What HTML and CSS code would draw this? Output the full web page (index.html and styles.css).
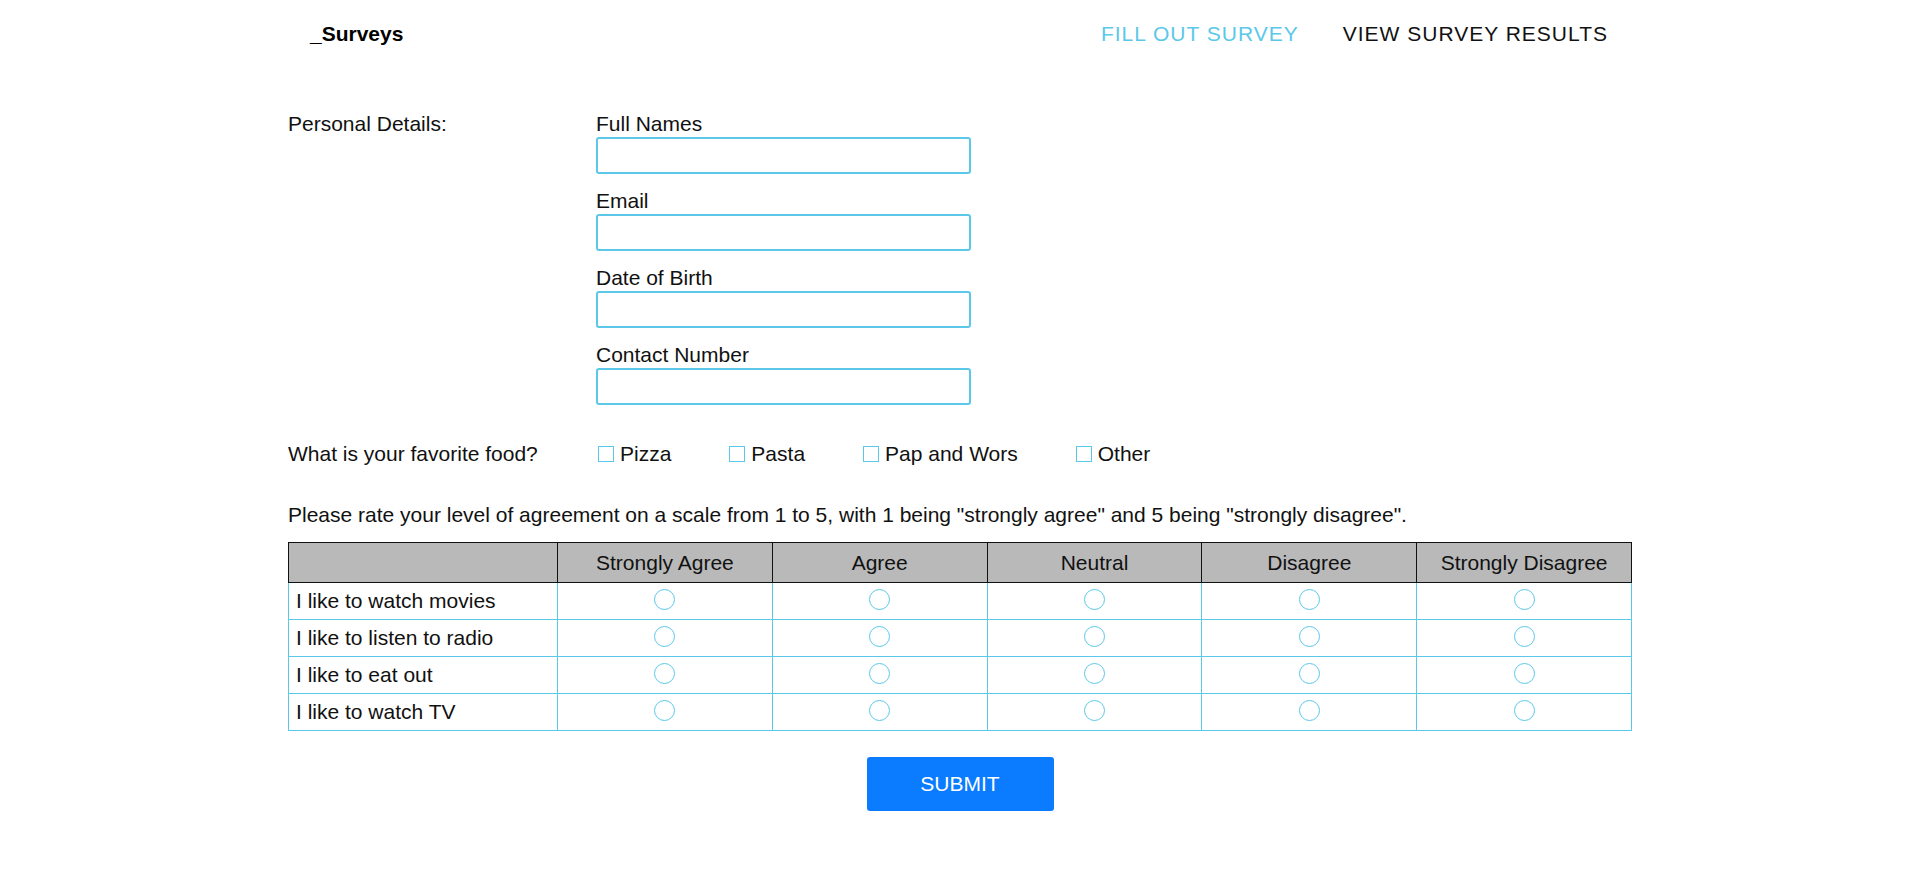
FILE: index.html
```html
<!DOCTYPE html>
<html lang="en">
<head>
<meta charset="utf-8">
<title>_Surveys</title>
<link rel="stylesheet" href="styles.css">
</head>
<body>
<div class="page">
  <header class="topbar">
    <div class="brand">_Surveys</div>
    <nav class="nav">
      <a class="nav-link active" href="#">FILL OUT SURVEY</a>
      <a class="nav-link" href="#">VIEW SURVEY RESULTS</a>
    </nav>
  </header>

  <form class="survey">
    <div class="row personal">
      <div class="row-label">Personal Details:</div>
      <div class="fields">
        <div class="field">
          <label class="field-label">Full Names</label>
          <input class="text-input" type="text">
        </div>
        <div class="field">
          <label class="field-label">Email</label>
          <input class="text-input" type="text">
        </div>
        <div class="field">
          <label class="field-label">Date of Birth</label>
          <input class="text-input" type="text">
        </div>
        <div class="field">
          <label class="field-label">Contact Number</label>
          <input class="text-input" type="text">
        </div>
      </div>
    </div>

    <div class="row food">
      <div class="row-label">What is your favorite food?</div>
      <div class="options">
        <label class="option"><input class="check" type="checkbox">Pizza</label>
        <label class="option"><input class="check" type="checkbox">Pasta</label>
        <label class="option"><input class="check" type="checkbox">Pap and Wors</label>
        <label class="option"><input class="check" type="checkbox">Other</label>
      </div>
    </div>

    <p class="instructions">Please rate your level of agreement on a scale from 1 to 5, with 1 being "strongly agree" and 5 being "strongly disagree".</p>

    <table class="rating">
      <thead>
        <tr>
          <th class="col-q"></th>
          <th>Strongly Agree</th>
          <th>Agree</th>
          <th>Neutral</th>
          <th>Disagree</th>
          <th>Strongly Disagree</th>
        </tr>
      </thead>
      <tbody>
        <tr>
          <td class="q">I like to watch movies</td>
          <td><input class="radio" type="radio" name="r1"></td>
          <td><input class="radio" type="radio" name="r1"></td>
          <td><input class="radio" type="radio" name="r1"></td>
          <td><input class="radio" type="radio" name="r1"></td>
          <td><input class="radio" type="radio" name="r1"></td>
        </tr>
        <tr>
          <td class="q">I like to listen to radio</td>
          <td><input class="radio" type="radio" name="r2"></td>
          <td><input class="radio" type="radio" name="r2"></td>
          <td><input class="radio" type="radio" name="r2"></td>
          <td><input class="radio" type="radio" name="r2"></td>
          <td><input class="radio" type="radio" name="r2"></td>
        </tr>
        <tr>
          <td class="q">I like to eat out</td>
          <td><input class="radio" type="radio" name="r3"></td>
          <td><input class="radio" type="radio" name="r3"></td>
          <td><input class="radio" type="radio" name="r3"></td>
          <td><input class="radio" type="radio" name="r3"></td>
          <td><input class="radio" type="radio" name="r3"></td>
        </tr>
        <tr>
          <td class="q">I like to watch TV</td>
          <td><input class="radio" type="radio" name="r4"></td>
          <td><input class="radio" type="radio" name="r4"></td>
          <td><input class="radio" type="radio" name="r4"></td>
          <td><input class="radio" type="radio" name="r4"></td>
          <td><input class="radio" type="radio" name="r4"></td>
        </tr>
      </tbody>
    </table>

    <div class="actions">
      <button class="submit" type="button">SUBMIT</button>
    </div>
  </form>
</div>
</body>
</html>
```

FILE: styles.css
```css
* {
  box-sizing: border-box;
}

html, body {
  margin: 0;
  padding: 0;
  background: #ffffff;
}

body {
  font-family: "Liberation Sans", Arial, sans-serif;
  font-size: 21px;
  line-height: 24px;
  color: #111111;
}

.page {
  width: 1344px;
  margin: 0 auto;
}

.topbar {
  height: 67px;
  display: flex;
  align-items: center;
  justify-content: space-between;
  padding: 0 24px 0 22px;
}

.brand {
  font-weight: bold;
  color: #000;
}

.nav {
  display: flex;
  gap: 44px;
}

.nav-link {
  color: #111111;
  text-decoration: none;
  letter-spacing: 1px;
}

.nav-link.active {
  color: #5bc8ea;
}

.survey {
  margin-top: 45px;
}

.row {
  display: grid;
  grid-template-columns: 308px 1fr;
}

.fields {
  display: flex;
  flex-direction: column;
  gap: 15px;
  width: 375px;
}

.field {
  display: flex;
  flex-direction: column;
}

.field-label {
  line-height: 24px;
}

.text-input {
  margin-top: 1px;
  height: 37px;
  width: 375px;
  border: 2px solid #5bc8ea;
  border-radius: 3px;
  outline: none;
  padding: 0 8px;
  font: inherit;
  background: #fff;
}

.food {
  margin-top: 37px;
}

.options {
  display: flex;
  align-items: center;
  gap: 58px;
  padding-left: 2px;
}

.option {
  display: flex;
  align-items: center;
}

.check {
  appearance: none;
  -webkit-appearance: none;
  width: 16px;
  height: 16px;
  margin: 0 6px 0 0;
  border: 1px solid #5bc8ea;
  background: #fff;
}

.instructions {
  margin: 37px 0 15px;
}

.rating {
  width: 1344px;
  border-collapse: collapse;
  table-layout: fixed;
}

.rating th {
  background: #b9b9b9;
  border: 1px solid #111111;
  font-weight: normal;
  padding: 7px 7px;
  text-align: center;
  height: 40px;
}

.rating th.col-q {
  width: 269px;
}

.rating td {
  border: 1px solid #5bc8ea;
  padding: 6px 7px;
  height: 37px;
  text-align: center;
}

.rating td.q {
  text-align: left;
}

.radio {
  appearance: none;
  -webkit-appearance: none;
  display: block;
  width: 21px;
  height: 21px;
  margin: -3px auto 0;
  border: 1px solid #5bc8ea;
  border-radius: 50%;
  background: #fff;
}

.actions {
  display: flex;
  justify-content: center;
  margin-top: 26px;
}

.submit {
  width: 187px;
  height: 54px;
  border: none;
  border-radius: 3px;
  background: #0b7bff;
  color: #ffffff;
  font: inherit;
  cursor: pointer;
}
```
